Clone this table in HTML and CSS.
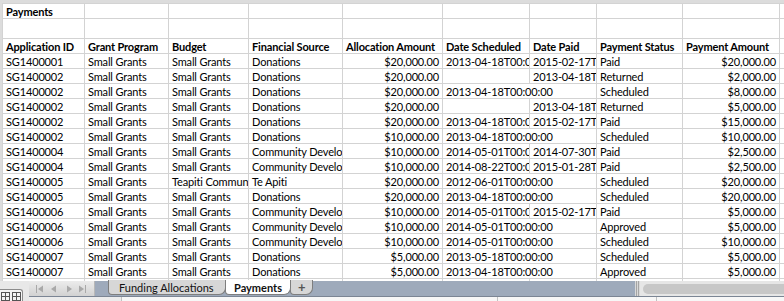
FILE: index.html
```html
<!DOCTYPE html>
<html lang="en">
<head>
<meta charset="utf-8">
<title>Payments</title>
<link rel="stylesheet" href="styles.css">
</head>
<body>
<div class="colhdr"></div>
<div class="sheet">
  <div class="rowhdr"></div>
  <div class="grid">
    <div class="c b">Payments</div><div class="c"></div><div class="c"></div><div class="c"></div><div class="c"></div><div class="c"></div><div class="c"></div><div class="c"></div><div class="c"></div><div class="c"></div>
    <div class="c"></div><div class="c"></div><div class="c"></div><div class="c"></div><div class="c"></div><div class="c"></div><div class="c"></div><div class="c"></div><div class="c"></div><div class="c"></div>
    <div class="c b">Application ID</div><div class="c b">Grant Program</div><div class="c b">Budget</div><div class="c b">Financial Source</div><div class="c b">Allocation Amount</div><div class="c b">Date Scheduled</div><div class="c b">Date Paid</div><div class="c b">Payment Status</div><div class="c b">Payment Amount</div><div class="c"></div>

    <div class="c">SG1400001</div><div class="c">Small Grants</div><div class="c">Small Grants</div><div class="c">Donations</div><div class="c r">$20,000.00</div><div class="c">2013-04-18T00:00:00</div><div class="c">2015-02-17T00:00:00</div><div class="c">Paid</div><div class="c r">$20,000.00</div><div class="c"></div>
    <div class="c">SG1400002</div><div class="c">Small Grants</div><div class="c">Small Grants</div><div class="c">Donations</div><div class="c r">$20,000.00</div><div class="c"></div><div class="c">2013-04-18T00:00:00</div><div class="c">Returned</div><div class="c r">$2,000.00</div><div class="c"></div>
    <div class="c">SG1400002</div><div class="c">Small Grants</div><div class="c">Small Grants</div><div class="c">Donations</div><div class="c r">$20,000.00</div><div class="c s2">2013-04-18T00:00:00</div><div class="c">Scheduled</div><div class="c r">$8,000.00</div><div class="c"></div>
    <div class="c">SG1400002</div><div class="c">Small Grants</div><div class="c">Small Grants</div><div class="c">Donations</div><div class="c r">$20,000.00</div><div class="c"></div><div class="c">2013-04-18T00:00:00</div><div class="c">Returned</div><div class="c r">$5,000.00</div><div class="c"></div>
    <div class="c">SG1400002</div><div class="c">Small Grants</div><div class="c">Small Grants</div><div class="c">Donations</div><div class="c r">$20,000.00</div><div class="c">2013-04-18T00:00:00</div><div class="c">2015-02-17T00:00:00</div><div class="c">Paid</div><div class="c r">$15,000.00</div><div class="c"></div>
    <div class="c">SG1400002</div><div class="c">Small Grants</div><div class="c">Small Grants</div><div class="c">Donations</div><div class="c r">$10,000.00</div><div class="c s2">2013-04-18T00:00:00</div><div class="c">Scheduled</div><div class="c r">$10,000.00</div><div class="c"></div>
    <div class="c">SG1400004</div><div class="c">Small Grants</div><div class="c">Small Grants</div><div class="c">Community Development</div><div class="c r">$10,000.00</div><div class="c">2014-05-01T00:00:00</div><div class="c">2014-07-30T00:00:00</div><div class="c">Paid</div><div class="c r">$2,500.00</div><div class="c"></div>
    <div class="c">SG1400004</div><div class="c">Small Grants</div><div class="c">Small Grants</div><div class="c">Community Development</div><div class="c r">$10,000.00</div><div class="c">2014-08-22T00:00:00</div><div class="c">2015-01-28T00:00:00</div><div class="c">Paid</div><div class="c r">$2,500.00</div><div class="c"></div>
    <div class="c">SG1400005</div><div class="c">Small Grants</div><div class="c">Teapiti Community</div><div class="c">Te Apiti</div><div class="c r">$20,000.00</div><div class="c s2">2012-06-01T00:00:00</div><div class="c">Scheduled</div><div class="c r">$20,000.00</div><div class="c"></div>
    <div class="c">SG1400005</div><div class="c">Small Grants</div><div class="c">Small Grants</div><div class="c">Donations</div><div class="c r">$20,000.00</div><div class="c s2">2013-04-18T00:00:00</div><div class="c">Scheduled</div><div class="c r">$20,000.00</div><div class="c"></div>
    <div class="c">SG1400006</div><div class="c">Small Grants</div><div class="c">Small Grants</div><div class="c">Community Development</div><div class="c r">$10,000.00</div><div class="c">2014-05-01T00:00:00</div><div class="c">2015-02-17T00:00:00</div><div class="c">Paid</div><div class="c r">$5,000.00</div><div class="c"></div>
    <div class="c">SG1400006</div><div class="c">Small Grants</div><div class="c">Small Grants</div><div class="c">Community Development</div><div class="c r">$10,000.00</div><div class="c s2">2014-05-01T00:00:00</div><div class="c">Approved</div><div class="c r">$5,000.00</div><div class="c"></div>
    <div class="c">SG1400006</div><div class="c">Small Grants</div><div class="c">Small Grants</div><div class="c">Community Development</div><div class="c r">$10,000.00</div><div class="c s2">2014-05-01T00:00:00</div><div class="c">Scheduled</div><div class="c r">$10,000.00</div><div class="c"></div>
    <div class="c">SG1400007</div><div class="c">Small Grants</div><div class="c">Small Grants</div><div class="c">Donations</div><div class="c r">$5,000.00</div><div class="c s2">2013-05-18T00:00:00</div><div class="c">Scheduled</div><div class="c r">$5,000.00</div><div class="c"></div>
    <div class="c">SG1400007</div><div class="c">Small Grants</div><div class="c">Small Grants</div><div class="c">Donations</div><div class="c r">$5,000.00</div><div class="c s2">2013-04-18T00:00:00</div><div class="c">Approved</div><div class="c r">$5,000.00</div><div class="c"></div>
    <div class="c"></div><div class="c"></div><div class="c"></div><div class="c"></div><div class="c"></div><div class="c"></div><div class="c"></div><div class="c"></div><div class="c"></div><div class="c"></div>
  </div>
</div>
<div class="bottom">
  <div class="views">
    <div class="viewbox">
      <svg width="22" height="10" viewBox="0 0 22 10">
        <g fill="none" stroke="#555" stroke-width="1">
          <rect x="1.5" y="1.5" width="8" height="8"/>
          <line x1="5.5" y1="1.5" x2="5.5" y2="9.5"/>
          <line x1="1.5" y1="5.5" x2="9.5" y2="5.5"/>
          <rect x="12.5" y="1.5" width="8" height="8"/>
          <line x1="16.5" y1="1.5" x2="16.5" y2="9.5"/>
          <line x1="12.5" y1="5.5" x2="20.5" y2="5.5"/>
        </g>
      </svg>
    </div>
  </div>
  <div class="right">
    <div class="tabbar">
      <div class="nav">
        <svg width="62" height="10" viewBox="0 0 62 10">
          <g fill="#a9a9a9">
            <rect x="5" y="1" width="1" height="8"/>
            <polygon points="7,5 12,1.5 12,8.5"/>
            <polygon points="20,5 25,1.5 25,8.5"/>
            <polygon points="41,5 36,1.5 36,8.5"/>
            <polygon points="53,5 48,1.5 48,8.5"/>
            <rect x="54" y="1" width="1" height="8"/>
          </g>
        </svg>
      </div>
      <div class="tab first">Funding Allocations</div>
      <div class="tab active">Payments</div>
      <div class="tab plus">+</div>
      <div class="spacer"></div>
      <div class="grip"></div>
      <div class="hscroll"><div class="thumb"></div></div>
    </div>
    <div class="status">
      <div class="seg s1"></div>
      <div class="seg s2w"></div>
      <div class="seg s3"></div>
      <div class="seg s4"></div>
    </div>
  </div>
</div>
</body>
</html>
```
FILE: styles.css
```css
html, body {
  margin: 0;
  padding: 0;
  width: 784px;
  height: 301px;
  overflow: hidden;
  background: #ffffff;
}

body {
  font-family: Lato, "Open Sans", "Liberation Sans", sans-serif;
  font-size: 11px;
  color: #000;
}

.colhdr {
  height: 3px;
  background: #dcdcdc;
}

.sheet {
  display: flex;
  height: 278px;
  overflow: hidden;
}

.rowhdr {
  width: 2px;
  flex: none;
  background: #dcdcdc;
}

.grid {
  display: grid;
  grid-template-columns: 82px 84px 80px 94px 100px 87px 67px 86px 97px 80px;
  grid-template-rows: 15px 20px 15px repeat(16, 15px);
  border-top: 1px solid #d3d3d3;
  border-left: 1px solid #d3d3d3;
  flex: none;
}

.c {
  box-sizing: border-box;
  border-right: 1px solid #d3d3d3;
  border-bottom: 1px solid #d3d3d3;
  padding: 1px 3px 0 3px;
  line-height: 14px;
  white-space: nowrap;
  overflow: hidden;
  letter-spacing: -0.15px;
}

.b { font-weight: bold; }
.r { text-align: right; }
.s2 { grid-column: span 2; }

.bottom {
  display: flex;
  height: 20px;
}

.views {
  width: 29px;
  flex: none;
  background: #e8e8e8;
  display: flex;
  align-items: flex-end;
}

.viewbox {
  width: 23px;
  height: 12px;
  box-sizing: border-box;
  border: 1px solid #8c8c8c;
  border-left: none;
  border-bottom: none;
  border-radius: 0 3px 0 0;
  background: #f4f4f4;
  display: flex;
  align-items: center;
}

.right {
  flex: 1;
  display: flex;
  flex-direction: column;
}

.tabbar {
  height: 15px;
  display: flex;
  background: #9eaabb;
  border-bottom: 1px solid #7b8594;
}

.nav {
  width: 66px;
  flex: none;
  background: linear-gradient(#ececec, #d2d2d2);
  display: flex;
  align-items: center;
  justify-content: center;
  border-right: 1px solid #b8b8b8;
  box-sizing: border-box;
}

.tab {
  flex: none;
  box-sizing: border-box;
  height: 15px;
  margin-top: -1px;
  padding: 0 0 0 10px;
  background: #d7d7d7;
  border: 1px solid #7e7e7e;
  border-top: none;
  border-radius: 0 0 7px 4px;
  line-height: 15px;
  font-size: 11px;
  color: #111;
  white-space: nowrap;
  overflow: hidden;
}

.tab.first {
  margin-left: 13px;
  width: 118px;
}

.tab.active {
  background: #ffffff;
  font-weight: bold;
  width: 66px;
  padding-left: 8px;
  position: relative;
  z-index: 1;
  margin-left: -1px;
}

.tab.plus {
  width: 23px;
  padding-left: 7px;
  font-weight: bold;
  font-size: 13px;
  color: #555;
  margin-left: -1px;
}

.spacer {
  flex: 1;
}

.grip {
  width: 5px;
  flex: none;
  background: repeating-linear-gradient(90deg, #d9d9d9 0 1px, #a5a5a5 1px 2px);
}

.hscroll {
  width: 144px;
  flex: none;
  background: #e6e6e6;
  display: flex;
  align-items: center;
  padding-left: 3px;
  box-sizing: border-box;
}

.thumb {
  flex: 1;
  height: 10px;
  border-radius: 5px 0 0 5px;
  background: #c7c7c7;
}

.status {
  flex: 1;
  display: flex;
  background: #f7f7f7;
}

.seg {
  border-right: 1px solid #c2c2c2;
  flex: none;
}

.s1 { width: 92px; background: #ececec; }
.s2w { width: 375px; }
.s3 { width: 158px; }
.s4 { flex: 1; border-right: none; }
```
